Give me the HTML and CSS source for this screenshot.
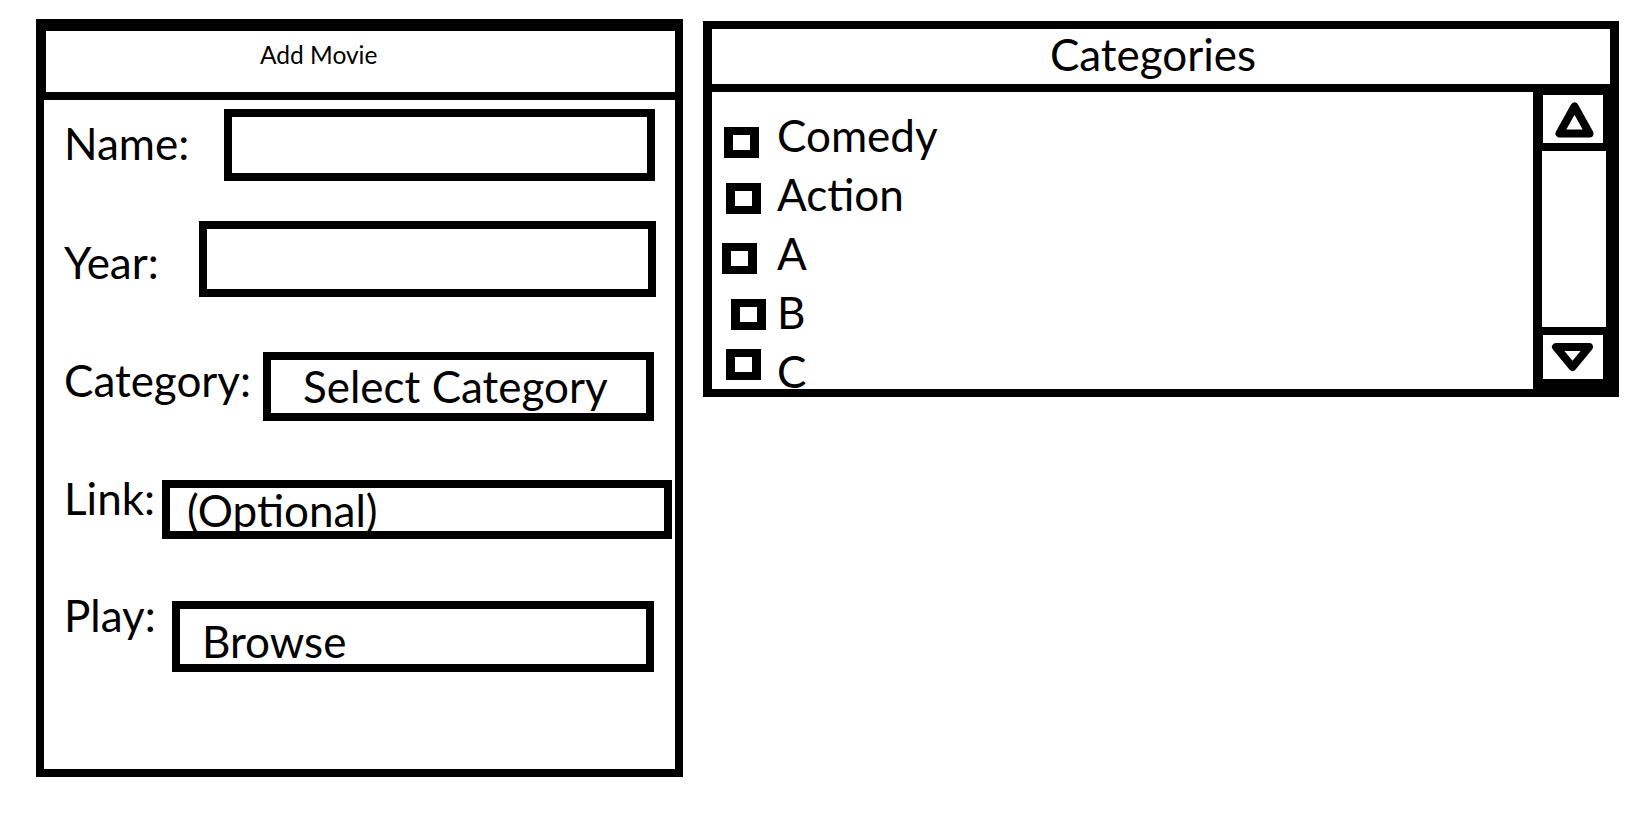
FILE: index.html
```html
<!DOCTYPE html>
<html lang="en">
<head>
<meta charset="utf-8">
<title>Add Movie</title>
<link rel="stylesheet" href="styles.css">
</head>
<body>
<div class="page">
  <section class="movie-panel">
    <header class="movie-head">Add Movie</header>
    <div class="movie-body">
      <div class="row row-name">
        <span class="label">Name:</span>
        <div class="field"></div>
      </div>
      <div class="row row-year">
        <span class="label">Year:</span>
        <div class="field"></div>
      </div>
      <div class="row row-cat">
        <span class="label">Category:</span>
        <div class="field"><span class="field-text">Select Category</span></div>
      </div>
      <div class="row row-link">
        <span class="label">Link:</span>
        <div class="field"><span class="field-text">(Optional)</span></div>
      </div>
      <div class="row row-play">
        <span class="label">Play:</span>
        <div class="field"><span class="field-text">Browse</span></div>
      </div>
    </div>
  </section>

  <section class="cat-panel">
    <header class="cat-head">Categories</header>
    <div class="cat-body">
      <ul class="cat-list">
        <li class="cat-item item-comedy"><span class="slot"><span class="box"></span></span><span class="cat-text">Comedy</span></li>
        <li class="cat-item item-action"><span class="slot"><span class="box"></span></span><span class="cat-text">Action</span></li>
        <li class="cat-item item-a"><span class="slot"><span class="box"></span></span><span class="cat-text">A</span></li>
        <li class="cat-item item-b"><span class="slot"><span class="box"></span></span><span class="cat-text">B</span></li>
        <li class="cat-item item-c"><span class="slot"><span class="box"></span></span><span class="cat-text">C</span></li>
      </ul>
      <div class="scrollbar">
        <div class="sb-btn sb-up">
          <svg width="60" height="48" viewBox="0 0 60 48"><polygon points="31.5,11.5 16.5,38.5 46.5,38.5" fill="#fff" stroke="#000" stroke-width="8" stroke-linejoin="round"/></svg>
        </div>
        <div class="sb-track"></div>
        <div class="sb-btn sb-down">
          <svg width="60" height="44" viewBox="0 0 60 44"><polygon points="13,12 46,12 29.5,32" fill="#fff" stroke="#000" stroke-width="8" stroke-linejoin="round"/></svg>
        </div>
      </div>
    </div>
  </section>
</div>
</body>
</html>
```

FILE: styles.css
```css
html, body {
  margin: 0;
  padding: 0;
  background: #fff;
}

body {
  font-family: "Lato", "Liberation Sans", sans-serif;
  color: #000;
}

.page {
  display: flex;
  align-items: flex-start;
  gap: 20px;
  padding: 19px 0 0 36px;
}

/* ---------- Add Movie panel ---------- */
.movie-panel {
  flex: none;
  width: 647px;
}

.movie-head {
  box-sizing: border-box;
  height: 81px;
  border-style: solid;
  border-color: #000;
  border-width: 12px 8px 8px 10px;
  padding: 12px 0 0 214px;
  font-size: 24.5px;
  line-height: 24px;
}

.movie-body {
  box-sizing: border-box;
  height: 677px;
  border-style: solid;
  border-color: #000;
  border-width: 0 8px 8px 8px;
  overflow: hidden;
}

.row {
  display: flex;
  align-items: flex-start;
}

.label {
  flex: none;
  margin-left: 20px;
  font-size: 44px;
  line-height: 44px;
  white-space: nowrap;
}

.field {
  flex: none;
  box-sizing: border-box;
  border: 8px solid #000;
  overflow: visible;
}

.field-text {
  display: block;
  font-size: 44px;
  line-height: 44px;
  white-space: nowrap;
}

.row-name { margin-top: 9px; }
.row-name .label { width: 160px; margin-top: 12px; }
.row-name .field { width: 431px; height: 72px; }

.row-year { margin-top: 40px; }
.row-year .label { width: 135px; margin-top: 19px; }
.row-year .field { width: 457px; height: 76px; }

.row-cat { margin-top: 55px; }
.row-cat .label { width: 199px; margin-top: 6px; }
.row-cat .field { width: 391px; height: 69px; }
.row-cat .field-text { padding: 4px 0 0 32px; }

.row-link { margin-top: 59px; }
.row-link .label { width: 98px; margin-top: -4px; }
.row-link .field { width: 510px; height: 59px; }
.row-link .field-text { line-height: 40px; padding: 2px 0 0 17px; }

.row-play { margin-top: 62px; }
.row-play .label { width: 108px; margin-top: -8px; }
.row-play .field { width: 482px; height: 71px; }
.row-play .field-text { padding: 10px 0 0 22px; }

/* ---------- Categories panel ---------- */
.cat-panel {
  flex: none;
  width: 916px;
  margin-top: 2px;
}

.cat-head {
  box-sizing: border-box;
  height: 71px;
  border: 8px solid #000;
  border-left-width: 9px;
  border-right-width: 9px;
  text-align: center;
  padding: 1px 16px 6px 0;
  font-size: 44px;
  line-height: 48px;
}

.cat-body {
  box-sizing: border-box;
  display: flex;
  height: 305px;
  border-style: solid;
  border-color: #000;
  border-width: 0 0 8px 9px;
}

.cat-list {
  flex: 1;
  margin: 0;
  padding: 14px 0 0 0;
  list-style: none;
  height: 297px;
  box-sizing: border-box;
  overflow: hidden;
}

.cat-item {
  display: flex;
  align-items: flex-start;
  height: 59px;
}

.slot {
  flex: none;
  width: 65px;
}

.box {
  display: block;
  box-sizing: border-box;
  width: 35px;
  height: 31px;
  border-style: solid;
  border-color: #000;
  border-width: 8px 9px;
  margin-left: 12px;
  margin-top: 21px;
}

.item-action .box { margin-left: 14px; margin-top: 18px; }
.item-a .box { margin-left: 10px; margin-top: 19px; }
.item-b .box { margin-left: 19px; margin-top: 16px; }
.item-c .box { margin-left: 14px; margin-top: 7px; }

.cat-text {
  font-size: 44px;
  line-height: 59px;
  white-space: nowrap;
}

.scrollbar {
  flex: none;
  width: 86px;
  height: 297px;
  box-sizing: border-box;
  background: #000;
  padding: 3px 0 0 10px;
}

.sb-btn {
  background: #fff;
  width: 60px;
}

.sb-btn svg {
  display: block;
}

.sb-up { height: 48px; }

.sb-track {
  background: #fff;
  width: 64px;
  height: 176px;
  margin: 8px 0 0 -1px;
}

.sb-down {
  height: 44px;
  margin-top: 8px;
}
```
